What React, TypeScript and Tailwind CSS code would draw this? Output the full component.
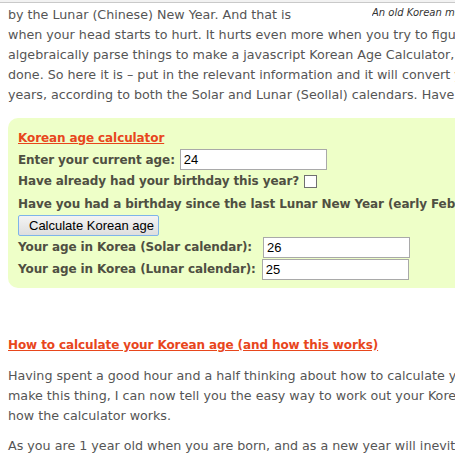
export default function App() {
    return (
        <div className="w-[455px] h-[455px] overflow-hidden bg-white font-['DejaVu_Sans',Verdana,sans-serif] text-[#555] text-[12.7px]">
            {/* top edge of the page */}
            <div className="h-[2px] bg-[#f2f2f2]"></div>
            <div className="h-px bg-[#c9c9c9]"></div>

            {/* intro paragraph */}
            <div className="pl-2 pt-[2px] leading-[20px] whitespace-nowrap overflow-hidden">
                <div className="flex justify-between items-start h-[20px]">
                    <span>by the Lunar (Chinese) New Year. And that is</span>
                    <span className="italic text-[10px] leading-[16px] text-[#333] w-[83px] overflow-hidden">An old Korean man</span>
                </div>
                <div>when your head starts to hurt. It hurts even more when you try to figure</div>
                <div>algebraically parse things to make a javascript Korean Age Calculator, but</div>
                <div>done. So here it is – put in the relevant information and it will convert your</div>
                <div>years, according to both the Solar and Lunar (Seollal) calendars. Have fun</div>
            </div>

            {/* calculator box */}
            <div className="ml-2 mt-[13px] w-[460px] h-[170px] bg-[#eeffc8] rounded-[10px] pl-[10px] pt-[12px] font-bold text-[12px] tracking-[-0.1px] text-[#4f4f42] whitespace-nowrap overflow-hidden">
                <div className="text-[#e8461c] underline leading-[16px] h-[16px]">Korean age calculator</div>
                <div className="flex items-center mt-[3px] h-[21px]">
                    <span>Enter your current age:</span>
                    <input
                        readOnly
                        value="24"
                        className="ml-[5px] w-[147px] h-[21px] border border-[#a9a9a9] bg-white px-[3px] font-['Liberation_Sans',Arial,sans-serif] text-[13px] font-normal tracking-normal text-black"
                    />
                </div>
                <div className="flex items-center h-[22px]">
                    <span>Have already had your birthday this year?</span>
                    <span className="ml-[5px] w-[13px] h-[13px] border border-[#707070] bg-white"></span>
                </div>
                <div className="flex items-center h-[23px]">Have you had a birthday since the last Lunar New Year (early February)?</div>
                <button className="h-[21px] w-[141px] pl-[10px] border border-[#7eb4ea] rounded-[2px] bg-gradient-to-b from-[#f4f4f4] to-[#dedede] font-['Liberation_Sans',Arial,sans-serif] font-normal tracking-normal text-black text-[13px] text-left">
                    Calculate Korean age
                </button>
                <div className="flex items-center h-[22px]">
                    <span>Your age in Korea (Solar calendar):</span>
                    <input
                        readOnly
                        value="26"
                        className="ml-[11px] w-[147px] h-[21px] border border-[#a9a9a9] bg-white px-[3px] font-['Liberation_Sans',Arial,sans-serif] text-[13px] font-normal tracking-normal text-black"
                    />
                </div>
                <div className="flex items-center h-[22px]">
                    <span>Your age in Korea (Lunar calendar):</span>
                    <input
                        readOnly
                        value="25"
                        className="ml-[6px] w-[147px] h-[21px] border border-[#a9a9a9] bg-white px-[3px] font-['Liberation_Sans',Arial,sans-serif] text-[13px] font-normal tracking-normal text-black"
                    />
                </div>
            </div>

            {/* how it works */}
            <div className="pl-2 mt-[48px] font-bold text-[12px] tracking-[-0.1px] text-[#e8461c] underline leading-[18px] h-[18px] whitespace-nowrap">
                How to calculate your Korean age (and how this works)
            </div>
            <div className="pl-2 mt-[12px] leading-[20px] whitespace-nowrap overflow-hidden">
                <div>Having spent a good hour and a half thinking about how to calculate your</div>
                <div>make this thing, I can now tell you the easy way to work out your Korean</div>
                <div>how the calculator works.</div>
            </div>
            <div className="pl-2 mt-[10px] leading-[20px] whitespace-nowrap overflow-hidden">
                As you are 1 year old when you are born, and as a new year will inevitably
            </div>
        </div>
    );
}
